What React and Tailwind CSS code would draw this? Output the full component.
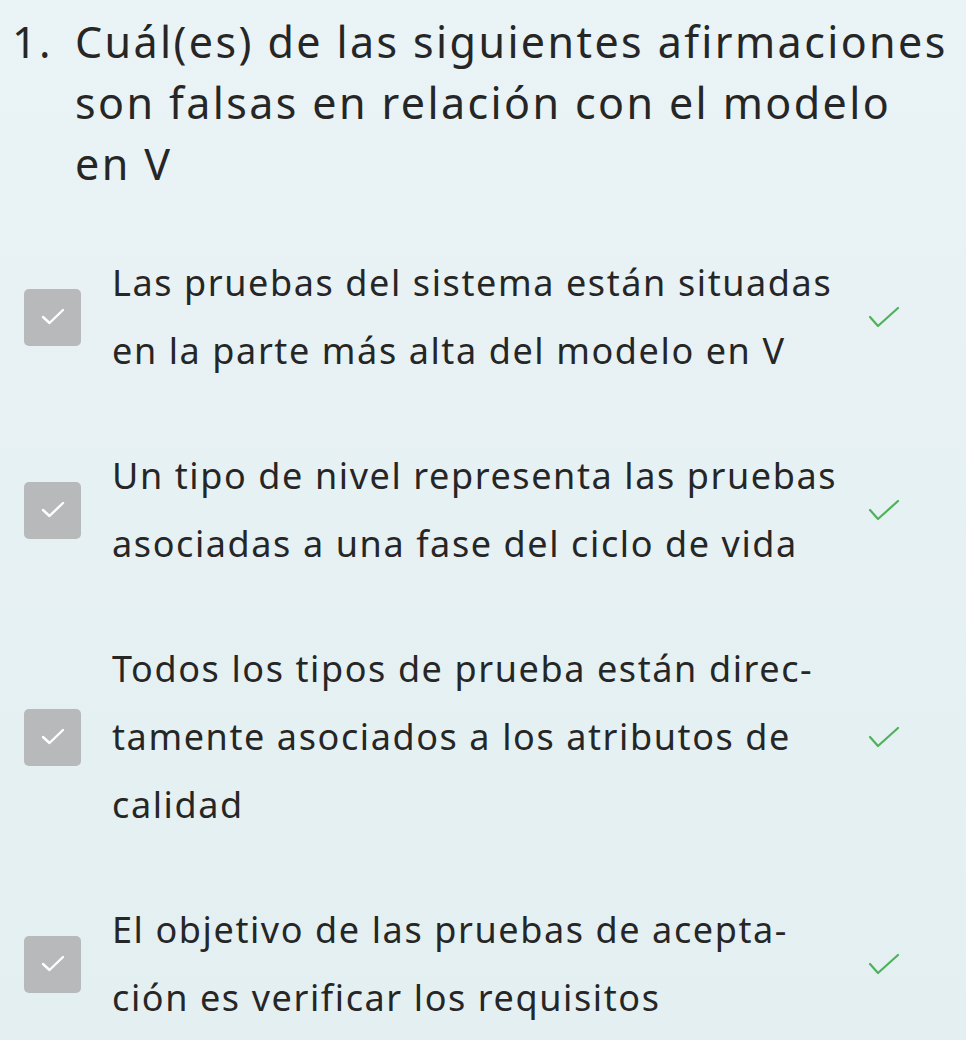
import React from 'react';

const options = [
  ['Las pruebas del sistema están situadas', 'en la parte más alta del modelo en V'],
  ['Un tipo de nivel representa las pruebas', 'asociadas a una fase del ciclo de vida'],
  ['Todos los tipos de prueba están direc-', 'tamente asociados a los atributos de', 'calidad'],
  ['El objetivo de las pruebas de acepta-', 'ción es verificar los requisitos'],
];

const BoxCheck = () => (
  <div className="w-[57px] h-[57px] rounded-[5px] bg-[#b8b9ba] flex items-center justify-center shrink-0">
    <svg width="24" height="18" viewBox="0 0 24 18" fill="none">
      <polyline points="2,9 8.5,15 22,2" stroke="#ffffff" strokeWidth="2.4" strokeLinecap="round" strokeLinejoin="round" />
    </svg>
  </div>
);

const GreenCheck = () => (
  <svg width="32" height="24" viewBox="0 0 32 24" fill="none">
    <polyline points="2,12 10,21 30,3" stroke="#4fb25a" strokeWidth="2.2" strokeLinecap="round" strokeLinejoin="round" />
  </svg>
);

export default function App() {
  return (
    <div className="w-[966px] h-[1040px] overflow-hidden bg-gradient-to-b from-[#eaf3f5] to-[#e3eff1] text-[#262626] font-['Noto_Sans','Liberation_Sans',sans-serif] [font-variant-ligatures:none]">
      <div className="flex pt-[11px] pl-[12px] text-[43px] leading-[61px] tracking-[2.4px]">
        <span className="w-[63px] shrink-0">1.</span>
        <div className="whitespace-nowrap">
          Cuál(es) de las siguientes afirmaciones<br />
          son falsas en relación con el modelo<br />
          en V
        </div>
      </div>

      <div className="mt-[55px] flex flex-col gap-[57px]">
        {options.map((lines, i) => (
          <div key={i} className="flex items-center">
            <div className="w-[112px] pl-[24px] shrink-0">
              <BoxCheck />
            </div>
            <div className="w-[752px] text-[36px] leading-[68px] tracking-[1.6px] whitespace-nowrap">
              {lines.map((l, j) => (
                <div key={j}>{l}</div>
              ))}
            </div>
            <div className="w-[40px] flex justify-center">
              <GreenCheck />
            </div>
          </div>
        ))}
      </div>
    </div>
  );
}
